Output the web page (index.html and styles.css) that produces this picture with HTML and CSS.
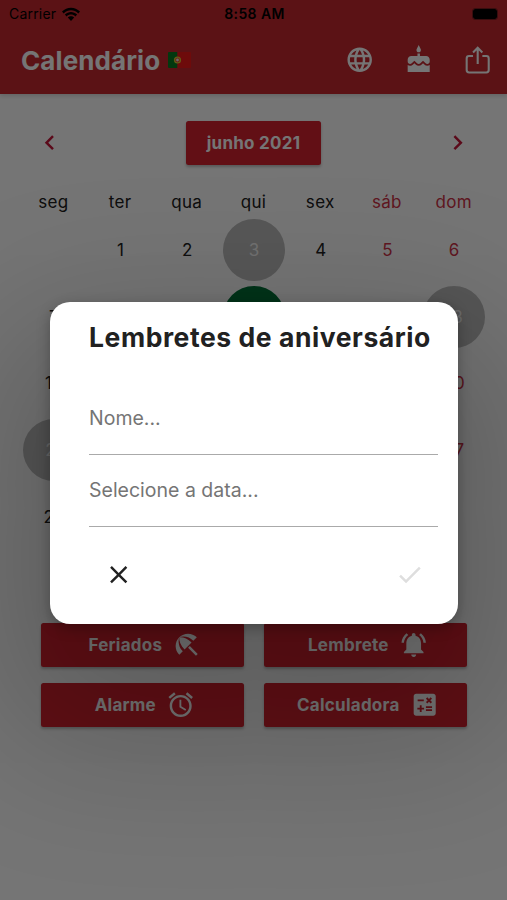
FILE: index.html
```
<!DOCTYPE html>
<html lang="pt">
  <head>
    <meta charset="UTF-8" />
    <meta name="viewport" content="width=device-width, initial-scale=1.0" />
    <title>Calendário</title>
    <link rel="stylesheet" href="styles.css">
  </head>
  <body>
    <div class="app">
      <header>
        <div class="status">
          <div class="carrier">
            <span>Carrier</span>
            <svg class="wifi" viewBox="0 0 18 14">
              <path d="M0 4.6C5-.7 13-.7 18 4.6l-1.700 1.800c-4-4.200-10.600-4.200-14.600 0zM2.900 7.600c3.400-3.600 8.800-3.600 12.200 0l-1.700 1.800c-2.400-2.600-6.400-2.600-8.800 0zM5.800 10.600c1.800-1.900 4.600-1.900 6.400 0L9 14z" />
            </svg>
          </div>
          <span class="time">8:58 AM</span>
          <div class="battery-box"><span class="battery"></span></div>
        </div>
        <div class="bar">
          <h1>Calendário</h1>
          <svg class="flag" viewBox="0 0 23 16">
            <rect width="9.500" height="16" fill="#087a22" />
            <rect x="9.500" width="13.500" height="16" fill="#f01818" />
            <circle cx="9.500" cy="8" r="3.600" fill="#d9c52e" />
            <circle cx="9.500" cy="8" r="2.200" fill="#e33" />
            <circle cx="9.500" cy="8" r="1.400" fill="#eee" />
          </svg>
          <nav>
            <svg class="icon" viewBox="0 0 24 24"><path d="M11.990 2C6.470 2 2 6.480 2 12s4.470 10 9.990 10C17.520 22 22 17.520 22 12S17.520 2 11.990 2zm6.930 6h-2.950c-.32-1.250-.78-2.450-1.380-3.560 1.840.63 3.370 1.910 4.330 3.560zM12 4.040c.83 1.200 1.480 2.530 1.910 3.960h-3.820c.43-1.430 1.080-2.760 1.910-3.960zM4.260 14C4.100 13.360 4 12.690 4 12s.1-1.360.26-2h3.380c-.08.66-.14 1.320-.14 2 0 .68.06 1.340.14 2H4.260zm.82 2h2.950c.32 1.250.78 2.450 1.380 3.560-1.840-.63-3.370-1.900-4.330-3.560zm2.950-8H5.080c.96-1.660 2.490-2.930 4.330-3.560C8.810 5.550 8.350 6.750 8.030 8zM12 19.960c-.83-1.200-1.480-2.530-1.910-3.960h3.820c-.43 1.430-1.080 2.760-1.910 3.960zM14.340 14H9.660c-.09-.66-.16-1.320-.16-2 0-.68.07-1.350.16-2h4.680c.09.65.16 1.320.16 2 0 .68-.07 1.340-.16 2zm.25 5.560c.6-1.110 1.060-2.310 1.380-3.560h2.950c-.96 1.650-2.490 2.930-4.330 3.560zM16.360 14c.08-.66.14-1.320.14-2 0-.68-.06-1.340-.14-2h3.380c.16.64.26 1.310.26 2s-.1 1.360-.26 2h-3.380z" /></svg>
            <svg class="icon" viewBox="0 0 24 24"><path d="M12 6c1.110 0 1.800-.9 1.800-2 0-.38-.1-.73-.29-1.030L12 0l-1.510 2.970c-.19.3-.29.65-.29 1.030 0 1.100.7 2 1.800 2zm4.600 9.990l-1.070-1.070-1.080 1.070c-1.300 1.300-3.580 1.310-4.890 0l-1.070-1.070-1.090 1.070C6.750 16.640 5.880 17 4.960 17c-.73 0-1.400-.23-1.960-.61V22h18v-5.610c-.56.38-1.230.61-1.960.61-.92 0-1.790-.36-2.440-1.010zM18 9h-5V7h-2v2H6c-1.660 0-3 1.340-3 3v1.540c0 1.080.88 1.960 1.960 1.960.52 0 1.020-.2 1.380-.57l2.140-2.130 2.130 2.130c.74.74 2.030.74 2.770 0l2.140-2.130 2.130 2.130c.37.37.86.57 1.380.57 1.080 0 1.960-.88 1.960-1.960V12C21 10.340 19.660 9 18 9z" /></svg>
            <svg class="icon line" viewBox="0 0 24 24"><path d="M8.200 9H5a2 2 0 0 0-2 2v9.500a2 2 0 0 0 2 2h14a2 2 0 0 0 2-2V11a2 2 0 0 0-2-2h-3.200M12 15.500V2.700M8.200 6.100 12 2.300l3.800 3.800" /></svg>
          </nav>
        </div>
      </header>

      <main>
        <div class="month">
          <svg class="icon" viewBox="0 0 24 24"><path d="M15.410 7.410L14 6l-6 6 6 6 1.410-1.410L10.830 12z" /></svg>
          <button class="btn current">junho 2021</button>
          <svg class="icon" viewBox="0 0 24 24"><path d="M10 6L8.590 7.410 13.170 12l-4.580 4.590L10 18l6-6z" /></svg>
        </div>

        <div class="week">
          <span>seg</span><span>ter</span><span>qua</span><span>qui</span><span>sex</span><span class="red">sáb</span><span class="red">dom</span>
        </div>
        <div class="days">
          <span></span>
          <span>1</span>
          <span>2</span>
          <span class="holiday">3</span>
          <span>4</span>
          <span class="red">5</span>
          <span class="red">6</span>
          <!-- the dialog covers the middle columns from here on -->
          <span>7</span>
          <span></span>
          <span></span>
          <span class="holiday today"></span>
          <span></span>
          <span></span>
          <span class="holiday">13</span>
          <span>14</span>
          <span></span>
          <span></span>
          <span></span>
          <span></span>
          <span></span>
          <span class="red">20</span>
          <span class="holiday">21</span>
          <span></span>
          <span></span>
          <span></span>
          <span></span>
          <span></span>
          <span class="red">27</span>
          <span>28</span>
        </div>

        <div class="actions">
          <button class="btn">Feriados
            <svg class="icon" viewBox="0 0 24 24"><path d="M13.127 14.560l1.430-1.430 6.440 6.443L19.570 21zm4.293-5.730l2.860-2.860c-3.950-3.950-10.350-3.960-14.300-.02 3.930-1.300 8.310-.25 11.440 2.880zM5.950 5.980c-3.940 3.950-3.930 10.350.02 14.300l2.860-2.860C5.700 14.290 4.650 9.910 5.950 5.980zm.02-.02l-.01.01c-.38 3.010 1.170 6.880 4.300 10.020l5.730-5.730c-3.130-3.130-7.010-4.680-10.020-4.300z" /></svg>
          </button>
          <button class="btn">Lembrete
            <svg class="icon" viewBox="0 0 24 24"><path d="M7.580 4.080L6.150 2.650C3.750 4.480 2.170 7.300 2.030 10.500h2c.15-2.650 1.510-4.970 3.550-6.420zm12.390 6.420h2c-.15-3.200-1.730-6.020-4.120-7.850l-1.420 1.430c2.020 1.450 3.390 3.770 3.540 6.420zM18 11c0-3.070-1.640-5.640-4.500-6.320V4c0-.83-.67-1.500-1.500-1.500s-1.500.67-1.500 1.500v.68C7.630 5.360 6 7.920 6 11v5l-2 2v1h16v-1l-2-2v-5zm-6 11c.14 0 .27-.01.4-.04.65-.14 1.180-.58 1.440-1.180.1-.24.15-.5.15-.78h-4c.01 1.100.9 2 2.010 2z" /></svg>
          </button>
          <button class="btn">Alarme
            <svg class="icon" viewBox="0 0 24 24"><path d="M22 5.720l-4.600-3.860-1.290 1.530 4.600 3.860L22 5.720zM7.880 3.390L6.600 1.860 2 5.710l1.290 1.530 4.590-3.850zM12.500 8H11v6l4.750 2.850.75-1.230-4-2.370V8zM12 4c-4.970 0-9 4.030-9 9s4.020 9 9 9c4.970 0 9-4.030 9-9s-4.030-9-9-9zm0 16c-3.870 0-7-3.130-7-7s3.130-7 7-7 7 3.130 7 7-3.130 7-7 7z" /></svg>
          </button>
          <button class="btn">Calculadora
            <svg class="icon" viewBox="0 0 24 24"><path d="M19 3H5c-1.100 0-2 .9-2 2v14c0 1.100.9 2 2 2h14c1.100 0 2-.9 2-2V5c0-1.100-.9-2-2-2zm-5.970 4.060L14.090 6l1.410 1.410L16.910 6l1.060 1.060-1.410 1.410 1.410 1.410-1.060 1.060-1.410-1.400-1.410 1.410-1.060-1.060 1.410-1.410-1.410-1.420zm-6.780.66h5v1.500h-5v-1.500zM11.500 16h-2v2H8v-2H6v-1.500h2v-2h1.500v2h2V16zm6.500 1.250h-5v-1.500h5v1.500zm0-2.500h-5v-1.500h5v1.500z" /></svg>
          </button>
        </div>
      </main>

      <div class="overlay">
        <div class="dialog">
          <h2>Lembretes de aniversário</h2>
          <div class="field">Nome...</div>
          <div class="field">Selecione a data...</div>
          <div class="dialog-actions">
            <svg class="icon" viewBox="0 0 24 24"><path d="M19 6.410L17.590 5 12 10.590 6.410 5 5 6.410 10.590 12 5 17.590 6.410 19 12 13.410 17.590 19 19 17.590 13.410 12z" /></svg>
            <svg class="icon disabled" viewBox="0 0 24 24"><path d="M9 16.170L4.830 12l-1.420 1.410L9 19 21 7l-1.410-1.410z" /></svg>
          </div>
        </div>
      </div>
    </div>
  </body>
</html>
```

FILE: styles.css
```
* {
  margin: 0;
  padding: 0;
  box-sizing: border-box;
}
body {
  font-family: Inter, "Liberation Sans", sans-serif;
  color: #212121;
}
.app {
  position: relative;
  height: 900px;
  overflow: hidden;
  background: #fff;
}
.icon {
  display: block;
  flex: none;
  width: 29.4px;
  height: 29.4px;
  fill: currentColor;
}
.icon.line {
  fill: none;
  stroke: currentColor;
  stroke-width: 1.7;
  overflow: visible;
}

/* header */
header {
  height: 94px;
  background: #c6282f;
  color: #fff;
  box-shadow: 0 2px 4px rgba(0, 0, 0, 0.15);
}
.status {
  display: grid;
  grid-template-columns: 1fr auto 1fr;
  align-items: center;
  height: 27px;
  padding: 0 7px 0 9px;
  font-size: 14px;
  color: #000;
}
.carrier {
  display: flex;
  align-items: center;
  gap: 6px;
  letter-spacing: 0.2px;
}
.wifi {
  width: 18px;
  height: 14px;
}
.time {
  font-weight: 600;
  letter-spacing: 0.4px;
}
.battery-box {
  display: flex;
  justify-content: flex-end;
}
.battery {
  width: 26px;
  height: 12px;
  border: 1px solid #7d1d20;
  border-radius: 3px;
  background: #000;
  background-clip: padding-box;
  margin-right: 2px;
}
.bar {
  display: flex;
  align-items: center;
  height: 66px;
  padding: 0 15px 0 21px;
}
h1 {
  font-size: 26px;
  font-weight: 700;
  letter-spacing: 0.1px;
}
.flag {
  width: 23px;
  height: 16px;
  margin-left: 8px;
  border-radius: 1px;
}
nav {
  display: flex;
  gap: 29.3px;
  margin-left: auto;
}

/* calendar */
main {
  padding: 27px 20px 0;
}
.month {
  display: flex;
  align-items: center;
  justify-content: space-between;
  padding: 0 14.5px;
  color: #c6163a;
}
.btn {
  display: flex;
  align-items: center;
  justify-content: center;
  gap: 10px;
  height: 44px;
  border: none;
  border-radius: 2.5px;
  background: #d5212e;
  color: #fff;
  font-family: inherit;
  font-size: 17px;
  font-weight: 700;
  letter-spacing: 0.25px;
  box-shadow: 0 2px 3px rgba(0, 0, 0, 0.25);
}
.current {
  width: 135px;
}
.week,
.days {
  display: grid;
  grid-template-columns: repeat(7, 1fr);
  justify-items: center;
  align-items: center;
  font-size: 17px;
}
.week {
  height: 36px;
  margin-top: 19px;
  letter-spacing: 0.3px;
}
.days {
  grid-auto-rows: 66.6px;
  margin: -3px -0.5px 0 0.5px;
}
.days span {
  width: 62px;
  height: 62px;
  line-height: 62px;
  text-align: center;
}
.red {
  color: #d03348;
}
.days .holiday {
  border-radius: 50%;
  background: #bdbdbd;
  color: #f5f5f5;
}
.days .today {
  background: #007238;
}
.actions {
  display: grid;
  grid-template-columns: 1fr 1fr;
  gap: 16px 20px;
  padding: 0 20px 0 21px;
  margin-top: 73px;
}
.actions .btn {
  padding-left: 5px;
}

/* dialog */
.overlay {
  position: absolute;
  inset: 0;
  background: rgba(0, 0, 0, 0.54);
}
.dialog {
  width: 408px;
  height: 322px;
  margin: 302px 0 0 50px;
  padding: 19px 20px 0 39px;
  border-radius: 20px;
  background: #fff;
  box-shadow: 0 4px 14px rgba(0, 0, 0, 0.28),
    0 70px 150px 50px rgba(0, 0, 0, 0.2);
}
h2 {
  height: 62px;
  line-height: 32px;
  font-size: 26.5px;
  font-weight: 700;
  letter-spacing: 0.56px;
  white-space: nowrap;
}
.field {
  height: 72px;
  line-height: 70px;
  border-bottom: 1.5px solid #aaa;
  font-size: 19.5px;
  color: #757575;
}
.dialog-actions {
  display: flex;
  justify-content: space-between;
  padding: 33px 14px 0 14.5px;
}
.disabled {
  color: #dedede;
}
```
